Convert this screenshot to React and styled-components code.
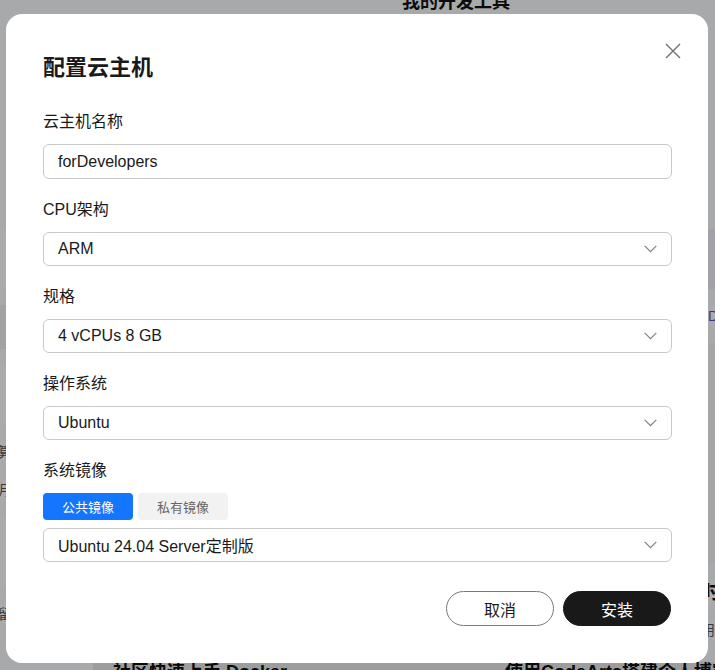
import styled, { createGlobalStyle } from "styled-components";

const GlobalStyle = createGlobalStyle`
  html, body {
    margin: 0;
    padding: 0;
    height: 100%;
    overflow: hidden;
  }
  body {
    font-family: "Liberation Sans", "Noto Sans CJK SC", sans-serif;
    color: #1a1a1a;
  }
`;

const CN = `"Liberation Sans", "Noto Sans CJK SC", sans-serif`;

// ---- page behind the dialog ----

const Page = styled.div`
  height: 100vh;
  display: flex;
  flex-direction: column;
  background: #fbfcff;
  overflow: hidden;
`;

const PageTitle = styled.h2`
  margin: -10px 0 0;
  padding-right: 205px;
  text-align: right;
  font: 700 18px/24px ${CN};
  color: #111;
`;

const PageBody = styled.div`
  flex: 1;
  display: flex;
  justify-content: space-between;
  padding-top: 215px;
`;

const SideCol = styled.div`
  display: flex;
  flex-direction: column;
  gap: 16px;
  width: 60px;
  margin-left: ${(p) => (p.$left ? "-48px" : "0")};
  margin-right: ${(p) => (p.$left ? "0" : "-46px")};
`;

const SideBand = styled.div`
  height: ${(p) => p.$h}px;
  background: ${(p) => p.$bg || "#fff"};
  font: ${(p) => (p.$bold ? "700 20px" : "14px")} / ${(p) => p.$h}px ${CN};
  color: ${(p) => (p.$bold ? "#111" : "#555")};
  white-space: nowrap;
  text-align: ${(p) => p.$align || "right"};
`;

const CardRow = styled.div`
  display: grid;
  grid-template-columns: 372px 372px;
  column-gap: 20px;
  margin-left: 93px;
  height: 8px;
  background: #ebebeb;
`;

const CardTitle = styled.div`
  padding: 0 20px;
  font: 700 18px/20px ${CN};
  color: #111;
  white-space: nowrap;
`;

// ---- dialog ----

const Overlay = styled.div`
  position: fixed;
  inset: 0;
  background: rgba(0, 0, 0, 0.33);
  display: flex;
  align-items: flex-start;
  padding: 14px 7px 0 6px;
`;

const Dialog = styled.div`
  position: relative;
  box-sizing: border-box;
  width: 702px;
  height: 649px;
  background: #fff;
  border-radius: 16px;
  padding: 39px 36px 0 37px;
  display: flex;
  flex-direction: column;
`;

const CloseBtn = styled.button`
  position: absolute;
  top: 28px;
  right: 26px;
  width: 18px;
  height: 18px;
  padding: 0;
  border: none;
  background: none;
  cursor: pointer;
  display: flex;
`;

const Title = styled.h1`
  margin: 0 0 28px;
  font: 700 22px/30px ${CN};
  color: #1a1a1a;
`;

const Field = styled.div`
  display: flex;
  flex-direction: column;
  margin-bottom: 20px;
`;

const Label = styled.label`
  font: 16px/22px ${CN};
  color: #1a1a1a;
  margin-bottom: 11px;
`;

const TextInput = styled.input`
  box-sizing: border-box;
  height: 35px;
  width: 100%;
  border: 1px solid #c9c9c9;
  border-radius: 6px;
  padding: 0 14px;
  font: 16px ${CN};
  color: #1a1a1a;
  outline: none;
`;

const Select = styled.div`
  box-sizing: border-box;
  height: 34px;
  border: 1px solid #c9c9c9;
  border-radius: 6px;
  padding: 0 14px;
  display: flex;
  align-items: center;
  justify-content: space-between;
  font: 16px ${CN};
  color: #1a1a1a;
  cursor: pointer;
`;

const Tabs = styled.div`
  display: flex;
  gap: 5px;
  margin-bottom: 8px;
`;

const Tab = styled.button`
  width: 90px;
  height: 27px;
  border: none;
  border-radius: 4px;
  padding: 0;
  font: 13px ${CN};
  background: ${(p) => (p.$active ? "#1476ff" : "#f2f2f2")};
  color: ${(p) => (p.$active ? "#fff" : "#666")};
  cursor: pointer;
`;

const Footer = styled.div`
  display: flex;
  justify-content: flex-end;
  gap: 9px;
  margin-top: 9px;
  padding-right: 1px;
`;

const Button = styled.button`
  box-sizing: border-box;
  width: 108px;
  height: 35px;
  border-radius: 18px;
  font: 16px ${CN};
  cursor: pointer;
  border: 1px solid ${(p) => (p.$primary ? "#191919" : "#7a7a7a")};
  background: ${(p) => (p.$primary ? "#191919" : "#fff")};
  color: ${(p) => (p.$primary ? "#fff" : "#1a1a1a")};
`;

function Chevron() {
  return (
    <svg width="13" height="8" viewBox="0 0 13 8" fill="none">
      <path d="M0.7 0.8 L6.5 6.6 L12.3 0.8" stroke="#808080" strokeWidth="1.2" />
    </svg>
  );
}

function SelectBox({ value }) {
  return (
    <Select>
      <span>{value}</span>
      <Chevron />
    </Select>
  );
}

export default function App() {
  return (
    <>
      <GlobalStyle />
      <Page>
        <PageTitle>我的开发工具</PageTitle>
        <PageBody>
          <SideCol $left>
            <SideBand $h={60} />
            <SideBand $h={44} $bg="#f2f2f2" />
            <SideBand $h={60} />
            <SideBand $h={22}>计算</SideBand>
            <SideBand $h={22}>包月</SideBand>
            <SideBand $h={70} />
            <SideBand $h={22}>存留</SideBand>
          </SideCol>
          <SideCol>
            <SideBand $h={60} $bg="#f4f1fb" />
            <SideBand $h={22} $align="left" style={{ color: "#6a4bd0" }}>
              sDev
            </SideBand>
            <SideBand $h={220} $bg="#f6f6f6" />
            <SideBand $h={26} $bold $align="left">
              时间
            </SideBand>
            <SideBand $h={18} $align="left">
              用t
            </SideBand>
          </SideCol>
        </PageBody>
        <CardRow>
          <CardTitle>社区快速上手 Docker</CardTitle>
          <CardTitle>使用CodeArts搭建个人博客平台</CardTitle>
        </CardRow>
      </Page>

      <Overlay>
        <Dialog>
          <CloseBtn aria-label="关闭">
            <svg width="18" height="18" viewBox="0 0 18 18" fill="none">
              <path d="M2 2 L16 16 M16 2 L2 16" stroke="#707070" strokeWidth="1.4" />
            </svg>
          </CloseBtn>
          <Title>配置云主机</Title>

          <Field>
            <Label>云主机名称</Label>
            <TextInput defaultValue="forDevelopers" />
          </Field>

          <Field>
            <Label>CPU架构</Label>
            <SelectBox value="ARM" />
          </Field>

          <Field>
            <Label>规格</Label>
            <SelectBox value="4 vCPUs 8 GB" />
          </Field>

          <Field>
            <Label>操作系统</Label>
            <SelectBox value="Ubuntu" />
          </Field>

          <Field>
            <Label>系统镜像</Label>
            <Tabs>
              <Tab $active>公共镜像</Tab>
              <Tab>私有镜像</Tab>
            </Tabs>
            <SelectBox value="Ubuntu 24.04 Server定制版" />
          </Field>

          <Footer>
            <Button>取消</Button>
            <Button $primary>安装</Button>
          </Footer>
        </Dialog>
      </Overlay>
    </>
  );
}
